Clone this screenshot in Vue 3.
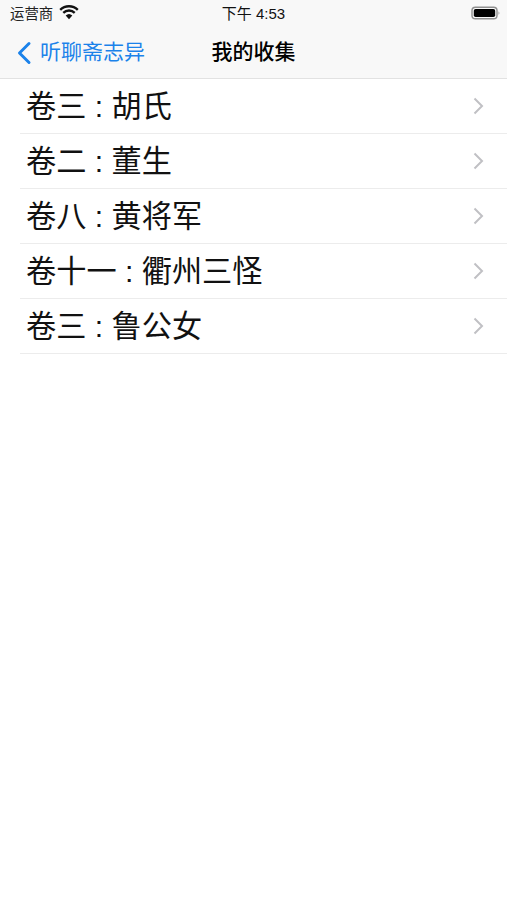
<script setup>
const items = [
  '卷三 : 胡氏',
  '卷二 : 董生',
  '卷八 : 黄将军',
  '卷十一 : 衢州三怪',
  '卷三 : 鲁公女',
]
</script>

<template>
  <div class="page">
    <header class="top">
      <div class="status">
        <div class="status-left">
          <span class="carrier">运营商</span>
          <svg class="wifi" width="20" height="15" viewBox="0 0 20 15">
            <path d="M10 14.2 L6.7 10.6 A4.8 4.8 0 0 1 13.3 10.6 Z" fill="#111" />
            <path d="M4.3 7.9 A8 8 0 0 1 15.7 7.9" fill="none" stroke="#111" stroke-width="2.3" />
            <path d="M1.2 4.9 A12.4 12.4 0 0 1 18.8 4.9" fill="none" stroke="#111" stroke-width="2.3" />
          </svg>
        </div>
        <span class="time">下午 4:53</span>
        <svg class="battery" width="30" height="14" viewBox="0 0 30 14">
          <rect x="1" y="1.2" width="25" height="11.6" rx="3.4" fill="none" stroke="#8f8f8f" stroke-width="1.4" />
          <rect x="2.8" y="3" width="21.4" height="8" rx="1.8" fill="#000" />
          <path d="M27.5 5.2 Q29.4 7 27.5 8.8 Z" fill="#9a9a9a" />
        </svg>
      </div>
      <nav class="nav">
        <div class="back">
          <svg width="16" height="24" viewBox="0 0 16 24">
            <path d="M13 2.5 L3.5 12 L13 21.5" fill="none" stroke="#1b82ea" stroke-width="3" stroke-linecap="round" stroke-linejoin="round" />
          </svg>
          <span class="back-text">听聊斋志异</span>
        </div>
        <div class="title">我的收集</div>
      </nav>
    </header>
    <ul class="list">
      <li v-for="(item, i) in items" :key="i" class="row">
        <span class="name">{{ item }}</span>
        <svg class="chevron" width="11" height="18" viewBox="0 0 11 18">
          <path d="M1.5 1.5 L9 9 L1.5 16.5" fill="none" stroke="#c0c0c4" stroke-width="2" />
        </svg>
      </li>
    </ul>
  </div>
</template>

<style>
html, body { margin: 0; background: #fff; }
</style>

<style scoped>
.page { width: 507px; height: 900px; overflow: hidden; background: #fff; font-family: "Liberation Sans", "Noto Sans CJK SC", sans-serif; color: #000; }
.top { background: #f8f8f8; border-bottom: 1px solid #e2e2e2; height: 79px; box-sizing: border-box; }
.status { display: flex; align-items: center; justify-content: space-between; height: 27px; padding: 0 6px 0 10px; position: relative; }
.status-left { display: flex; align-items: center; gap: 6px; }
.carrier { font-size: 14.4px; color: #222; padding-bottom: 3px; }
.wifi { margin-top: -3px; }
.time { font-size: 15px; color: #111; position: absolute; left: 0; right: 0; top: 2px; text-align: center; }
.battery { position: relative; top: -1px; }
.nav { display: flex; align-items: center; height: 51px; position: relative; padding-left: 16px; }
.back { display: flex; align-items: center; gap: 8px; color: #1b82ea; font-size: 21px; }
.back-text { padding-bottom: 5px; }
.title { position: absolute; left: 0; right: 0; top: 8px; text-align: center; font-size: 21px; font-weight: 500; }
.list { list-style: none; margin: 0; padding: 0 0 0 20px; }
.row { display: flex; align-items: center; justify-content: space-between; height: 55px; box-sizing: border-box; border-bottom: 1px solid #ececec; padding: 0 23px 0 6px; }
.name { font-size: 30.2px; color: #111; padding-bottom: 4px; }
.chevron { flex-shrink: 0; }
</style>
